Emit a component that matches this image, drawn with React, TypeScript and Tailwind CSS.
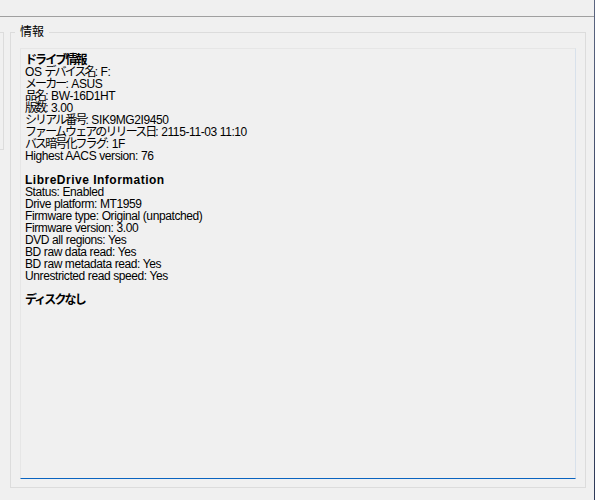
const driveLines = [
  "OS デバイス名: F:",
  "メーカー: ASUS",
  "品名: BW-16D1HT",
  "版数: 3.00",
  "シリアル番号: SIK9MG2I9450",
  "ファームウェアのリリース日: 2115-11-03 11:10",
  "バス暗号化フラグ: 1F",
  "Highest AACS version: 76",
];

const libreLines = [
  "Status: Enabled",
  "Drive platform: MT1959",
  "Firmware type: Original (unpatched)",
  "Firmware version: 3.00",
  "DVD all regions: Yes",
  "BD raw data read: Yes",
  "BD raw metadata read: Yes",
  "Unrestricted read speed: Yes",
];

// japanese runs are narrower in the original UI font, tighten them up
function Line({ text, bold }: { text: string; bold?: boolean }) {
  const parts = text.split(/([\u3000-\u9fff\uff00-\uffef]+)/).filter(Boolean);
  return (
    <div className={bold ? "font-bold tracking-[0.5px]" : "tracking-[-0.4px]"}>
      {parts.map((part, i) =>
        /[\u3000-\u9fff\uff00-\uffef]/.test(part) ? (
          <span key={i} className={bold ? "tracking-[-1.9px]" : "tracking-[-1.9px]"}>
            {part}
          </span>
        ) : (
          <span key={i}>{part}</span>
        )
      )}
    </div>
  );
}

export default function App() {
  return (
    <div
      className="flex h-[500px] w-[595px] overflow-hidden bg-[#f0f0f0] text-black"
      style={{ fontFamily: '"Liberation Sans", "Noto Sans CJK JP", sans-serif' }}
    >
      <div className="flex w-[594px] flex-col">
        <div className="h-[17px] border-b border-[#a0a0a0]" />
        <div className="flex">
          <div className="mt-[15px] h-[118px] w-[4px] border-y border-r border-[#dcdcdc]" />
          <fieldset className="ml-[6px] mt-[9px] h-[462px] w-[576px] border border-[#dcdcdc] pl-[4px] pb-[8px]">
            <legend className="px-[5px] text-[12px] leading-[12px]">情報</legend>
            <div className="ml-[5px] mt-[10px] h-[431px] w-[556px] border border-b-[#0a64c0] border-l-[#e6e6e6] border-r-[#d8e1eb] border-t-[#e6e6e6] pl-[4px] pt-[5px] text-[12px] leading-[12px]">
              <Line text="ドライブ情報" bold />
              {driveLines.map((line) => (
                <Line key={line} text={line} />
              ))}
              <div className="h-[12px]" />
              <Line text="LibreDrive Information" bold />
              {libreLines.map((line) => (
                <Line key={line} text={line} />
              ))}
              <div className="h-[12px]" />
              <Line text="ディスクなし" bold />
            </div>
          </fieldset>
        </div>
      </div>
      <div className="w-px bg-gradient-to-b from-[#5a6580] via-[#3c4766] to-[#2e3a58]" />
    </div>
  );
}
